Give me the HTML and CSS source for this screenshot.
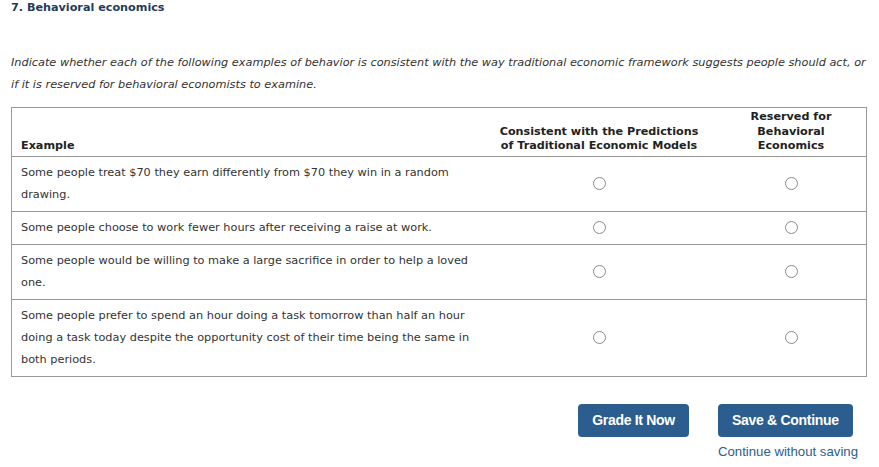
FILE: index.html
```html
<!DOCTYPE html>
<html>
<head>
<meta charset="utf-8">
<link rel="stylesheet" href="styles.css">
</head>
<body>
<div class="page">
  <h1 class="title">7. Behavioral economics</h1>
  <p class="intro">Indicate whether each of the following examples of behavior is consistent with the way traditional economic framework suggests people should act, or if it is reserved for behavioral economists to examine.</p>
  <table class="grid">
    <thead>
      <tr>
        <th class="col-ex">Example</th>
        <th class="col-a">Consistent with the Predictions<br>of Traditional Economic Models</th>
        <th class="col-b">Reserved for<br>Behavioral<br>Economics</th>
      </tr>
    </thead>
    <tbody>
      <tr>
        <td class="col-ex">Some people treat $70 they earn differently from $70 they win in a random drawing.</td>
        <td class="col-a"><span class="radio"></span></td>
        <td class="col-b"><span class="radio"></span></td>
      </tr>
      <tr>
        <td class="col-ex">Some people choose to work fewer hours after receiving a raise at work.</td>
        <td class="col-a"><span class="radio"></span></td>
        <td class="col-b"><span class="radio"></span></td>
      </tr>
      <tr>
        <td class="col-ex">Some people would be willing to make a large sacrifice in order to help a loved one.</td>
        <td class="col-a"><span class="radio"></span></td>
        <td class="col-b"><span class="radio"></span></td>
      </tr>
      <tr>
        <td class="col-ex">Some people prefer to spend an hour doing a task tomorrow than half an hour doing a task today despite the opportunity cost of their time being the same in both periods.</td>
        <td class="col-a"><span class="radio"></span></td>
        <td class="col-b"><span class="radio"></span></td>
      </tr>
    </tbody>
  </table>
  <div class="actions">
    <button class="btn">Grade It Now</button>
    <div class="save-group">
      <button class="btn">Save &amp; Continue</button>
      <a class="link" href="#">Continue without saving</a>
    </div>
  </div>
</div>
</body>
</html>
```

FILE: styles.css
```css
html, body {
  margin: 0;
  padding: 0;
  background: #fff;
}
.page {
  padding: 1px 13px 0 11px;
  font-family: "DejaVu Sans", Verdana, sans-serif;
  color: #333;
}
.title {
  margin: 0;
  font-size: 11.2px;
  line-height: 14px;
  font-weight: bold;
  color: #1f3b5c;
}
.intro {
  margin: 37px 0 11px;
  font-size: 11.3px;
  line-height: 22px;
  font-style: italic;
  color: #333;
}
.grid {
  width: 855px;
  border-collapse: collapse;
  border: 1px solid #999;
  table-layout: fixed;
}
.grid th {
  font-weight: bold;
  font-size: 11.2px;
  line-height: 14.5px;
  vertical-align: bottom;
  padding: 2px 9px 2px;
  border-bottom: 1px solid #999;
  color: #222;
}
.grid th.col-ex {
  text-align: left;
}
.grid td {
  font-size: 11.3px;
  line-height: 22px;
  padding: 5px 9px;
  border-bottom: 1px solid #999;
  color: #333;
}
.col-ex { width: 452px; }
.col-a { width: 216px; text-align: center; }
.col-b { width: 132px; text-align: center; }
.grid td.col-a, .grid td.col-b {
  vertical-align: middle;
}
.radio {
  display: inline-block;
  width: 11px;
  height: 11px;
  border: 1px solid #8a8a8a;
  border-radius: 50%;
  vertical-align: middle;
}
.actions {
  display: flex;
  justify-content: flex-end;
  gap: 29px;
  margin-top: 27px;
  padding-right: 8px;
}
.save-group {
  display: flex;
  flex-direction: column;
  align-items: flex-start;
  gap: 7px;
}
.btn {
  height: 33px;
  padding: 0 14px;
  background: #2b5e8f;
  color: #fff;
  border: none;
  border-radius: 4px;
  font-family: "Liberation Sans", Arial, sans-serif;
  font-weight: bold;
  font-size: 14px;
  letter-spacing: -0.3px;
}
.link {
  font-family: "Liberation Sans", Arial, sans-serif;
  font-size: 13.2px;
  color: #2b5e8f;
  text-decoration: none;
  line-height: 16px;
}
```
